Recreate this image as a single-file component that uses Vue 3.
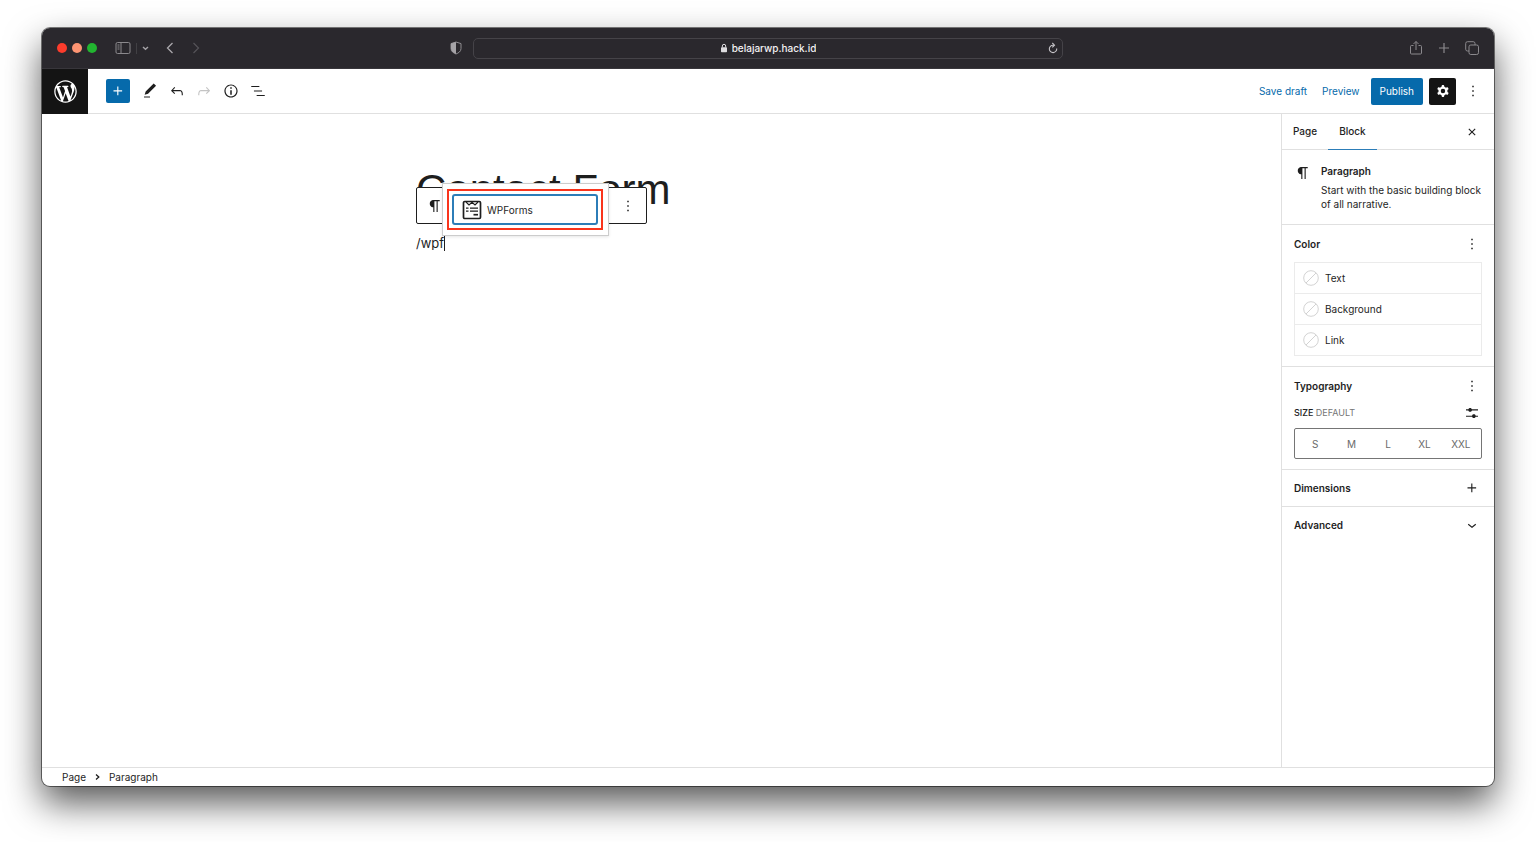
<script setup>
import { ref } from 'vue'

const url = ref('belajarwp.hack.id')
const blockText = ref('/wpf')
const activeTab = ref('Block')
const activeSize = ref('')

const tabs = ['Page', 'Block']
const colors = ['Text', 'Background', 'Link']
const sizes = ['S', 'M', 'L', 'XL', 'XXL']

const icons = {
  plus: 'M11 12.5V17.5H12.5V12.5H17.5V11H12.5V6H11V11H6V12.5H11Z',
  pencil: 'M20.1 5.1L16.9 2 6.2 12.7l-1.3 4.4 4.5-1.3L20.1 5.1zM4 20.8h8v-1.5H4v1.5z',
  undo: 'M18.3 11.7c-.6-.6-1.4-.9-2.3-.9H6.7l2.9-3.3-1.1-1-4.5 5L8.5 16l1-1-2.7-2.7H16c.5 0 .9.2 1.3.5 1 1 1 3.4 1 4.5v.3h1.5v-.2c0-1.5 0-4.3-1.5-5.7z',
  redo: 'M15.6 6.5l-1.1 1 2.9 3.3H8c-.9 0-1.7.3-2.3.9-1.4 1.5-1.4 4.2-1.4 5.6v.2h1.5v-.3c0-1.1 0-3.5 1-4.5.3-.3.7-.5 1.3-.5h9.2L14.5 15l1.1 1.1 4.6-4.6-4.6-5z',
  info: 'M12 3.2c-4.8 0-8.8 3.9-8.8 8.8 0 4.8 3.9 8.8 8.8 8.8 4.8 0 8.8-3.9 8.8-8.8 0-4.8-4-8.8-8.8-8.8zm0 16c-4 0-7.2-3.3-7.2-7.2C4.8 8 8 4.8 12 4.8s7.2 3.3 7.2 7.2c0 4-3.2 7.2-7.2 7.2zM11 17h2v-6h-2v6zm0-8h2V7h-2v2z',
  list: 'M13.8 5.2H3v1.5h10.8V5.2zm-3.6 12v1.5H21v-1.5H10.2zm7.2-6H6.6v1.5h10.8v-1.5z',
  cog: 'M10.289 4.836A1 1 0 0111.275 4h1.306a1 1 0 01.987.836l.244 1.466c.787.26 1.503.679 2.108 1.218l1.393-.522a1 1 0 011.216.437l.653 1.13a1 1 0 01-.23 1.273l-1.148.944a6.025 6.025 0 010 2.435l1.149.946a1 1 0 01.23 1.272l-.653 1.13a1 1 0 01-1.216.437l-1.394-.522c-.605.54-1.32.958-2.108 1.218l-.244 1.466a1 1 0 01-.987.836h-1.306a1 1 0 01-.986-.836l-.244-1.466a5.995 5.995 0 01-2.108-1.218l-1.394.522a1 1 0 01-1.217-.436l-.653-1.131a1 1 0 01.23-1.272l1.149-.946a6.026 6.026 0 010-2.435l-1.148-.944a1 1 0 01-.23-1.272l.653-1.131a1 1 0 011.217-.437l1.393.522a5.994 5.994 0 012.108-1.218l.244-1.466zM14.929 12a3 3 0 11-6 0 3 3 0 016 0z',
  more: 'M13 19h-2v-2h2v2zm0-6h-2v-2h2v2zm0-6h-2V5h2v2z',
  close: 'M12 13.06l3.712 3.713 1.061-1.06L13.061 12l3.712-3.712-1.06-1.06L12 10.938 8.288 7.227l-1.061 1.06L10.939 12l-3.712 3.712 1.06 1.061L12 13.061z',
  paragraph: 'M18.3 4H9.9v-.1l-.9.2c-2.3.4-4 2.4-4 4.8s1.7 4.4 4 4.8l.7.1V20h1.5V5.5h2.9V20h1.5V5.5h2.7V4z',
  sliders: 'M14.5 13.8c-1.1 0-2.1.7-2.4 1.8H4V17h8.1c.3 1 1.3 1.8 2.4 1.8s2.1-.7 2.4-1.8H20v-1.5h-3.1c-.3-1-1.3-1.7-2.4-1.7zM11.9 7c-.3-1-1.3-1.8-2.4-1.8S7.4 6 7.1 7H4v1.5h3.1c.3 1 1.3 1.8 2.4 1.8s2.1-.7 2.4-1.8H20V7h-8.1z',
  chevron: 'M17.5 11.6L12 16l-5.5-4.4.9-1.2L12 14l4.5-3.6 1 1.2z',
  wordpress: 'M20 10c0-5.51-4.49-10-10-10C4.48 0 0 4.49 0 10c0 5.52 4.48 10 10 10 5.51 0 10-4.48 10-10zM7.78 15.37L4.37 6.22c.55-.02 1.17-.08 1.17-.08.5-.06.44-1.13-.06-1.11 0 0-1.45.11-2.37.11-.18 0-.37 0-.58-.01C4.12 2.69 6.87 1.11 10 1.11c2.33 0 4.45.87 6.05 2.34-.68-.11-1.65.39-1.65 1.58 0 .74.45 1.36.9 2.1.35.61.55 1.36.55 2.46 0 1.49-1.4 5-1.4 5l-3.03-8.37c.54-.02.82-.17.82-.17.5-.05.44-1.25-.06-1.22 0 0-1.44.12-2.38.12-.87 0-2.33-.12-2.33-.12-.5-.03-.56 1.2-.06 1.22l.92.08 1.26 3.41zM17.41 10c.24-.64.74-1.87.43-4.25.7 1.29 1.05 2.71 1.05 4.25 0 3.29-1.73 6.24-4.4 7.78.97-2.59 1.94-5.2 2.92-7.78zM6.1 18.09C3.12 16.65 1.11 13.53 1.11 10c0-1.3.23-2.48.72-3.59C3.25 10.3 4.67 14.2 6.1 18.09zm4.03-6.63l2.58 6.98c-.86.29-1.76.45-2.71.45-.79 0-1.57-.11-2.29-.33.81-2.38 1.62-4.74 2.42-7.1z',
}
</script>

<template>
  <div class="desktop">
    <div class="window">
      <header class="chrome">
        <div class="chrome-left">
          <div class="lights">
            <button class="light red" aria-label="Close window"></button>
            <button class="light amber" aria-label="Minimize window"></button>
            <button class="light green" aria-label="Zoom window"></button>
          </div>
          <div class="side-toggle">
            <button class="cbtn" aria-label="Show sidebar">
              <svg width="16" height="12" viewBox="0 0 16 12" fill="none" stroke="#8b898d"><rect x="1" y=".5" width="14" height="11" rx="1.5" /><path d="M6 .5v11M2.5 3h2M2.5 5h2M2.5 7h2" /></svg>
            </button>
            <span class="divider"></span>
            <button class="cbtn" aria-label="Tab groups">
              <svg width="7" height="5" viewBox="0 0 7 5" fill="none" stroke="#a5a3a7" stroke-width="1.4"><path d="M1 1l2.5 2.2L6 1" /></svg>
            </button>
          </div>
          <div class="history">
            <button class="cbtn" aria-label="Back">
              <svg width="8" height="12" viewBox="0 0 8 12" fill="none" stroke="#aaa8ac" stroke-width="1.3"><path d="M6.5 1L1.5 6l5 5" /></svg>
            </button>
            <button class="cbtn" aria-label="Forward">
              <svg width="8" height="12" viewBox="0 0 8 12" fill="none" stroke="#555358" stroke-width="1.2"><path d="M1.5 1l5 5-5 5" /></svg>
            </button>
          </div>
          <button class="cbtn shield" aria-label="Privacy report">
            <svg width="12" height="14" viewBox="0 0 12 14"><path d="M6 1l5 1.600v5C11 10.400 8.500 12 6 13 3.500 12 1 10.400 1 7.600v-5z" fill="none" stroke="#8f8d91" /><path d="M6 1v12C3.500 12 1 10.400 1 7.600v-5z" fill="#a5a3a7" /></svg>
          </button>
        </div>
        <div class="address">
          <label class="url">
            <svg width="8" height="10" viewBox="0 0 8 10"><rect x="1" y="4.200" width="6" height="5" rx=".8" fill="#dedde0" /><path d="M2.300 4.500V3a1.700 1.700 0 013.400 0v1.500" fill="none" stroke="#dedde0" /></svg>
            <input v-model="url" aria-label="Address" />
          </label>
          <button class="cbtn" aria-label="Reload">
            <svg width="10" height="12" viewBox="0 0 10 12" fill="none" stroke="#c5c3c7" stroke-width="1.100"><path d="M8.700 6.500A3.700 3.700 0 115 3.200h1" /><path d="M4.300 1l2.200 2.200-2.200 2.200" /></svg>
          </button>
        </div>
        <div class="chrome-right">
          <button class="cbtn" aria-label="Share">
            <svg width="14" height="16" viewBox="0 0 14 16" fill="none" stroke="#8b898d"><path d="M4.500 5.500h-2a1 1 0 00-1 1V13a1 1 0 001 1h9a1 1 0 001-1V6.500a1 1 0 00-1-1h-2M7 10V1.500M4.500 4L7 1.500 9.500 4" /></svg>
          </button>
          <button class="cbtn" aria-label="New tab">
            <svg width="12" height="12" viewBox="0 0 12 12" stroke="#8b898d" stroke-width="1.200"><path d="M6 1v10M1 6h10" /></svg>
          </button>
          <button class="cbtn" aria-label="Show tabs">
            <svg width="14" height="14" viewBox="0 0 14 14" fill="none" stroke="#8b898d"><rect x="4" y="4" width="9.500" height="9.500" rx="1.800" /><path d="M4 10H2.500A1.800 1.800 0 01.7 8.200V2.500A1.800 1.800 0 012.500.7h5.700A1.800 1.800 0 0110 2.500V4" /></svg>
          </button>
        </div>
      </header>

      <div class="topbar">
        <a class="wp" href="#" aria-label="View pages">
          <svg width="27" height="27" viewBox="-2 -2 24 24" fill="#fff"><path :d="icons.wordpress" /></svg>
        </a>
        <div class="tools">
          <button class="tool add" aria-label="Toggle block inserter"><svg class="icon" viewBox="0 0 24 24"><path :d="icons.plus" /></svg></button>
          <button class="tool" aria-label="Tools"><svg class="icon" viewBox="0 0 24 24"><path :d="icons.pencil" /></svg></button>
          <button class="tool" aria-label="Undo"><svg class="icon" viewBox="0 0 24 24"><path :d="icons.undo" /></svg></button>
          <button class="tool off" aria-label="Redo" disabled><svg class="icon" viewBox="0 0 24 24"><path :d="icons.redo" /></svg></button>
          <button class="tool" aria-label="Details"><svg class="icon" viewBox="0 0 24 24"><path :d="icons.info" /></svg></button>
          <button class="tool" aria-label="List view"><svg class="icon" viewBox="0 0 24 24"><path :d="icons.list" /></svg></button>
        </div>
        <div class="actions">
          <button class="text-btn">Save draft</button>
          <button class="text-btn">Preview</button>
          <button class="publish">Publish</button>
          <button class="cog" aria-label="Settings"><svg class="icon" viewBox="0 0 24 24"><path fill-rule="evenodd" :d="icons.cog" /></svg></button>
          <button class="icon-btn" aria-label="Options"><svg class="icon" viewBox="0 0 24 24"><path :d="icons.more" /></svg></button>
        </div>
      </div>

      <div class="body">
        <main class="canvas">
          <div class="post">
            <h1>Contact Form</h1>
            <div class="block">
              <input v-model="blockText" class="block-input" aria-label="Paragraph block" /><span class="caret"></span>
              <div class="block-toolbar">
                <button aria-label="Paragraph"><svg class="icon" viewBox="0 0 24 24"><path :d="icons.paragraph" /></svg></button>
                <button aria-label="Block options"><svg class="icon" viewBox="0 0 24 24"><path :d="icons.more" /></svg></button>
              </div>
              <div class="popover">
                <div class="highlight">
                  <button class="option">
                    <svg width="20" height="20" viewBox="0 0 20 20" fill="none" stroke="#1e1e1e">
                      <rect x="1.500" y="1.500" width="17" height="17" rx="1.200" stroke-width="1.700" />
                      <path d="M4 2l3 3 3-2.700L13 5l3-3" stroke-width="1.200" />
                      <path d="M4 8.200h2.500M4 11.200h2.500M8 8.200h8M8 11.200h8" stroke-width="1.300" />
                      <path d="M11.500 14.700H16" stroke-width="1.700" />
                    </svg>
                    WPForms
                  </button>
                </div>
              </div>
            </div>
          </div>
        </main>

        <aside class="sidebar">
          <div class="tabs">
            <div class="tablist" role="tablist">
              <button v-for="t in tabs" :key="t" role="tab" :aria-selected="t === activeTab" :class="['tab', { active: t === activeTab }]" @click="activeTab = t">{{ t }}</button>
            </div>
            <button class="icon-btn" aria-label="Close settings"><svg class="icon" viewBox="0 0 24 24"><path :d="icons.close" /></svg></button>
          </div>

          <section class="card">
            <svg class="icon" viewBox="0 0 24 24"><path :d="icons.paragraph" /></svg>
            <div>
              <h2>Paragraph</h2>
              <p>Start with the basic building block of all narrative.</p>
            </div>
          </section>

          <section class="panel">
            <div class="panel-head">
              <h2>Color</h2>
              <button class="icon-btn" aria-label="Color options"><svg class="icon" viewBox="0 0 24 24"><path :d="icons.more" /></svg></button>
            </div>
            <div class="colors">
              <button v-for="c in colors" :key="c" class="color">
                <svg width="16" height="16" viewBox="0 0 16 16" fill="none" stroke="#d3d3d3"><circle cx="8" cy="8" r="7.300" /><path d="M3 13L13 3" /></svg>
                {{ c }}
              </button>
            </div>
          </section>

          <section class="panel">
            <div class="panel-head">
              <h2>Typography</h2>
              <button class="icon-btn" aria-label="Typography options"><svg class="icon" viewBox="0 0 24 24"><path :d="icons.more" /></svg></button>
            </div>
            <div class="size-head">
              <span class="size-label">SIZE <span>DEFAULT</span></span>
              <button class="icon-btn" aria-label="Set custom size"><svg class="icon" viewBox="0 0 24 24"><path :d="icons.sliders" /></svg></button>
            </div>
            <div class="sizes">
              <button v-for="s in sizes" :key="s" :aria-pressed="s === activeSize" @click="activeSize = s">{{ s }}</button>
            </div>
          </section>

          <section class="panel slim">
            <h2>Dimensions</h2>
            <button class="icon-btn" aria-label="Dimensions options"><svg class="icon" viewBox="0 0 24 24"><path :d="icons.plus" /></svg></button>
          </section>
          <section class="panel slim last">
            <h2>Advanced</h2>
            <button class="icon-btn" aria-label="Expand advanced"><svg class="icon" viewBox="0 0 24 24"><path :d="icons.chevron" /></svg></button>
          </section>
        </aside>
      </div>

      <nav class="crumbs" aria-label="Block breadcrumb">
        <button>Page</button>
        <svg width="5" height="8" viewBox="0 0 5 8" fill="none" stroke="#1e1e1e" stroke-width="1.300"><path d="M1 1.500L3.800 4 1 6.500" /></svg>
        <button>Paragraph</button>
      </nav>
    </div>
  </div>
</template>

<style>
body {
  margin: 0;
  background: #fff;
}
</style>

<style scoped>
* {
  box-sizing: border-box;
}
button,
input {
  font: inherit;
  color: inherit;
  background: none;
  border: 0;
  padding: 0;
  margin: 0;
  outline: 0;
}
svg {
  display: block;
  flex: none;
}
h1,
h2,
p {
  margin: 0;
}
.icon {
  width: 18px;
  height: 18px;
  fill: currentColor;
}
.desktop {
  min-height: 100vh;
  padding: 28px 42px 56px;
  display: flex;
  overflow: hidden;
  font: 10px/14px Inter, "Liberation Sans", sans-serif;
  color: #1e1e1e;
}
.window {
  flex: 1;
  display: flex;
  flex-direction: column;
  border-radius: 8px;
  background: #fff;
  box-shadow: 0 0 0 1px rgba(0, 0, 0, 0.5), 0 17px 36px rgba(0, 0, 0, 0.66);
}
.chrome {
  height: 41px;
  display: grid;
  grid-template-columns: 1fr minmax(0, 590px) 1fr;
  align-items: center;
  background: #2a282d;
  border-bottom: 1px solid #38363b;
  border-radius: 8px 8px 0 0;
}
.chrome-left,
.lights,
.side-toggle,
.history,
.chrome-right,
.url {
  display: flex;
  align-items: center;
}
.cbtn {
  display: flex;
}
.chrome-left {
  padding: 0 11px 0 15px;
}
.shield {
  margin-left: auto;
}
.lights {
  gap: 5px;
}
.light {
  width: 10px;
  height: 10px;
  border-radius: 50%;
}
.red {
  background: #fc3c2c;
}
.amber {
  background: #fd9472;
}
.green {
  background: #22b530;
}
.side-toggle {
  gap: 5px;
  margin-left: 18px;
}
.divider {
  width: 1px;
  height: 11px;
  background: #414044;
}
.history {
  gap: 18px;
  margin-left: 17px;
}
.address {
  height: 21px;
  display: flex;
  align-items: center;
  padding-right: 4px;
  border: 1px solid #454348;
  border-radius: 5px;
}
.url {
  flex: 1;
  justify-content: center;
  gap: 4px;
  padding-left: 14px;
  color: #f2f1f3;
  font-weight: 500;
}
.url input {
  field-sizing: content;
}
.chrome-right {
  justify-content: flex-end;
  gap: 15px;
  padding-right: 15px;
}
.topbar {
  height: 45px;
  display: flex;
  align-items: center;
  border-bottom: 1px solid #e0e0e0;
}
.wp {
  width: 46px;
  height: 45px;
  display: grid;
  place-items: center;
  align-self: flex-start;
  background: #141414;
}
.tools {
  display: flex;
  align-items: center;
  gap: 3px;
  margin-left: 18px;
}
.tool {
  width: 24px;
  height: 24px;
  display: grid;
  place-items: center;
}
.tool.add {
  margin-right: 5px;
  background: #066aab;
  color: #fff;
  border-radius: 2px;
}
.tool.off {
  color: #c4c4c4;
}
.actions {
  display: flex;
  align-items: center;
  margin-left: auto;
  padding-right: 11px;
}
.text-btn {
  color: #066aab;
  margin-right: 15px;
}
.text-btn + .publish {
  margin-left: -4px;
}
.publish {
  height: 27px;
  padding: 0 9px;
  background: #066aab;
  color: #fff;
  border-radius: 2px;
}
.cog {
  width: 27px;
  height: 27px;
  display: grid;
  place-items: center;
  margin: 0 8px 0 6px;
  background: #141414;
  color: #fff;
  border-radius: 2px;
}
.icon-btn {
  display: flex;
  margin-right: 1px;
}
.body {
  flex: 1;
  display: flex;
}
.canvas {
  flex: 1;
  padding: 50px 24px;
}
.post {
  max-width: 491px;
  margin: 0 auto;
}
h1 {
  font-family: "Liberation Sans", sans-serif;
  font-size: 42px;
  line-height: 52px;
  font-weight: 400;
  white-space: nowrap;
}
.block {
  position: relative;
  display: flex;
  align-items: center;
  height: 20px;
  margin-top: 17px;
  font-size: 13px;
}
.block-input {
  field-sizing: content;
}
.caret {
  width: 1px;
  height: 15px;
  background: #1e1e1e;
}
.block-toolbar {
  position: absolute;
  left: 0;
  bottom: 29px;
  width: 231px;
  height: 37px;
  display: flex;
  align-items: center;
  justify-content: space-between;
  padding: 0 9px;
  background: #fff;
  border: 1px solid #1e1e1e;
  border-radius: 2px;
}
.popover {
  position: absolute;
  left: 26px;
  bottom: 17px;
  width: 167px;
  padding: 5px 5px 5px 4px;
  background: #fff;
  border: 1px solid #ccc;
  box-shadow: 0 1px 3px rgba(0, 0, 0, 0.1);
}
.highlight {
  padding: 3px;
  border: 2px solid #f9341c;
}
.option {
  width: 100%;
  height: 31px;
  display: flex;
  align-items: center;
  gap: 5px;
  padding-left: 8px;
  font-size: 10px;
  border: 2px solid #2c7db8;
  border-radius: 3px;
}
.sidebar {
  width: 213px;
  border-left: 1px solid #e0e0e0;
}
.tabs {
  height: 36px;
  display: flex;
  justify-content: space-between;
  align-items: center;
  padding-right: 12px;
  border-bottom: 1px solid #e0e0e0;
}
.tablist {
  height: 36px;
  display: flex;
}
.tab {
  padding: 0 11px;
  font-weight: 500;
  border-bottom: 1px solid transparent;
}
.tab.active {
  border-bottom-color: #2c7db8;
}
h2 {
  font-size: 10px;
  line-height: 14px;
  font-weight: 600;
}
.card {
  display: flex;
  gap: 9px;
  padding: 14px 12px 13px;
  border-bottom: 1px solid #e0e0e0;
}
.card p {
  margin-top: 5px;
}
.panel {
  padding: 10px 12px;
  border-bottom: 1px solid #e0e0e0;
}
.panel-head,
.size-head {
  height: 18px;
  display: flex;
  justify-content: space-between;
  align-items: center;
}
.colors {
  margin-top: 9px;
  border: 1px solid #ebebeb;
  border-bottom: 0;
}
.color {
  width: 100%;
  height: 31px;
  display: flex;
  align-items: center;
  gap: 6px;
  padding-left: 8px;
  border-bottom: 1px solid #ebebeb;
}
.size-head {
  margin-top: 9px;
}
.size-label {
  font-size: 9px;
  font-weight: 500;
}
.size-label span {
  font-weight: 400;
  color: #757575;
}
.sizes {
  height: 31px;
  display: flex;
  margin-top: 6px;
  padding: 0 2px;
  border: 1px solid #757575;
  border-radius: 2px;
}
.sizes button {
  flex: 1 1 0;
  color: #6a6a6a;
}
.panel.slim {
  display: flex;
  align-items: center;
  justify-content: space-between;
  height: 37px;
  padding: 0 12px;
}
.panel.last {
  border-bottom-color: transparent;
}
.crumbs {
  height: 19px;
  display: flex;
  align-items: center;
  gap: 9px;
  padding-left: 20px;
  border-top: 1px solid #e0e0e0;
}
</style>
